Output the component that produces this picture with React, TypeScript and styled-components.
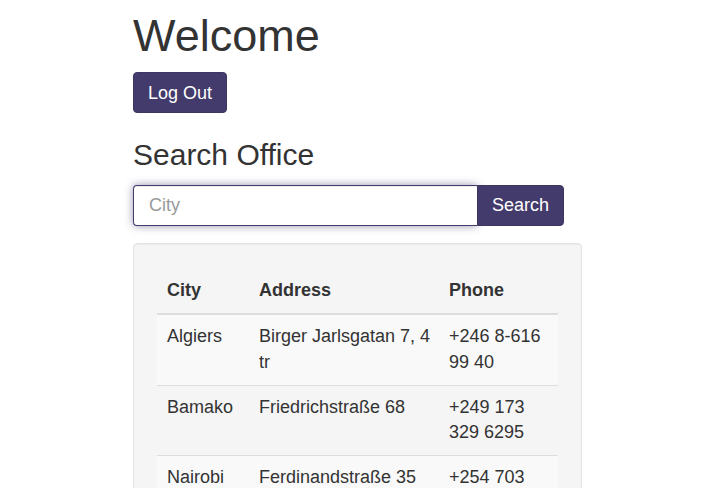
import React from "react";
import styled, { createGlobalStyle } from "styled-components";

const Global = createGlobalStyle`
  html, body { margin: 0; padding: 0; background: #fff; overflow: hidden; }
  body { font-family: "Liberation Sans", Arial, sans-serif; color: #333; }
  * { box-sizing: border-box; }
`;

const Page = styled.div`
  width: 449px;
  margin-left: 133px;
  padding-top: 11px;
`;

const Title = styled.h1`
  margin: 0;
  font-size: 45px;
  font-weight: 400;
  line-height: 1.1;
`;

const PrimaryButton = styled.button`
  font-family: inherit;
  font-size: 18px;
  line-height: 23px;
  color: #fff;
  background: #433b6b;
  border: 1px solid #3d3563;
  border-radius: 4px;
  padding: 8px 14px;
  cursor: pointer;
`;

const LogOut = styled(PrimaryButton)`
  margin-top: 11px;
  padding: 9px 14px 7px;
`;

const Subtitle = styled.h2`
  margin: 25px 0 0;
  font-size: 30px;
  font-weight: 400;
  line-height: 1.1;
`;

const InputGroup = styled.div`
  display: flex;
  width: 431px;
  margin-top: 14px;
`;

const CityInput = styled.input`
  flex: 1;
  height: 41px;
  font-family: inherit;
  font-size: 18px;
  color: #555;
  padding: 0 15px;
  border: 1px solid #433b6b;
  border-right: none;
  border-radius: 4px 0 0 4px;
  outline: none;
  box-shadow: inset 0 1px 1px rgba(0, 0, 0, 0.075), 0 0 8px rgba(67, 59, 107, 0.55);
  &::placeholder { color: #999; }
`;

const SearchButton = styled(PrimaryButton)`
  width: 87px;
  height: 41px;
  padding: 0 14px;
  border-radius: 0 4px 4px 0;
`;

const Well = styled.div`
  margin-top: 17px;
  padding: 23px;
  background: #f5f5f5;
  border: 1px solid #e3e3e3;
  border-radius: 4px;
  box-shadow: inset 0 1px 1px rgba(0, 0, 0, 0.05);
`;

const Table = styled.table`
  width: 401px;
  table-layout: fixed;
  border-collapse: collapse;
  font-size: 18px;
  line-height: 1.42857;
`;

const HeadCell = styled.th<{ $w: number }>`
  width: ${(p) => p.$w}px;
  text-align: left;
  font-weight: 700;
  padding: 11px 4px 10px 10px;
  border-bottom: 2px solid #ddd;
  vertical-align: bottom;
`;

const Row = styled.tr<{ $odd: boolean }>`
  background: ${(p) => (p.$odd ? "#f9f9f9" : "transparent")};
`;

const Cell = styled.td`
  padding: 9px 4px 9px 10px;
  border-top: 1px solid #ddd;
  vertical-align: top;
`;

const offices = [
  { city: "Algiers", address: "Birger Jarlsgatan 7, 4 tr", phone: "+246 8-616 99 40" },
  { city: "Bamako", address: "Friedrichstraße 68", phone: "+249 173 329 6295" },
  { city: "Nairobi", address: "Ferdinandstraße 35", phone: "+254 703 040 4455" },
];

export default function App() {
  return (
    <>
      <Global />
      <Page>
        <Title>Welcome</Title>
        <LogOut>Log Out</LogOut>
        <Subtitle>Search Office</Subtitle>
        <InputGroup>
          <CityInput placeholder="City" />
          <SearchButton>Search</SearchButton>
        </InputGroup>
        <Well>
          <Table>
            <thead>
              <tr>
                <HeadCell $w={92}>City</HeadCell>
                <HeadCell $w={190}>Address</HeadCell>
                <HeadCell $w={119}>Phone</HeadCell>
              </tr>
            </thead>
            <tbody>
              {offices.map((o, i) => (
                <Row key={o.city} $odd={i % 2 === 0}>
                  <Cell>{o.city}</Cell>
                  <Cell>{o.address}</Cell>
                  <Cell>{o.phone}</Cell>
                </Row>
              ))}
            </tbody>
          </Table>
        </Well>
      </Page>
    </>
  );
}
